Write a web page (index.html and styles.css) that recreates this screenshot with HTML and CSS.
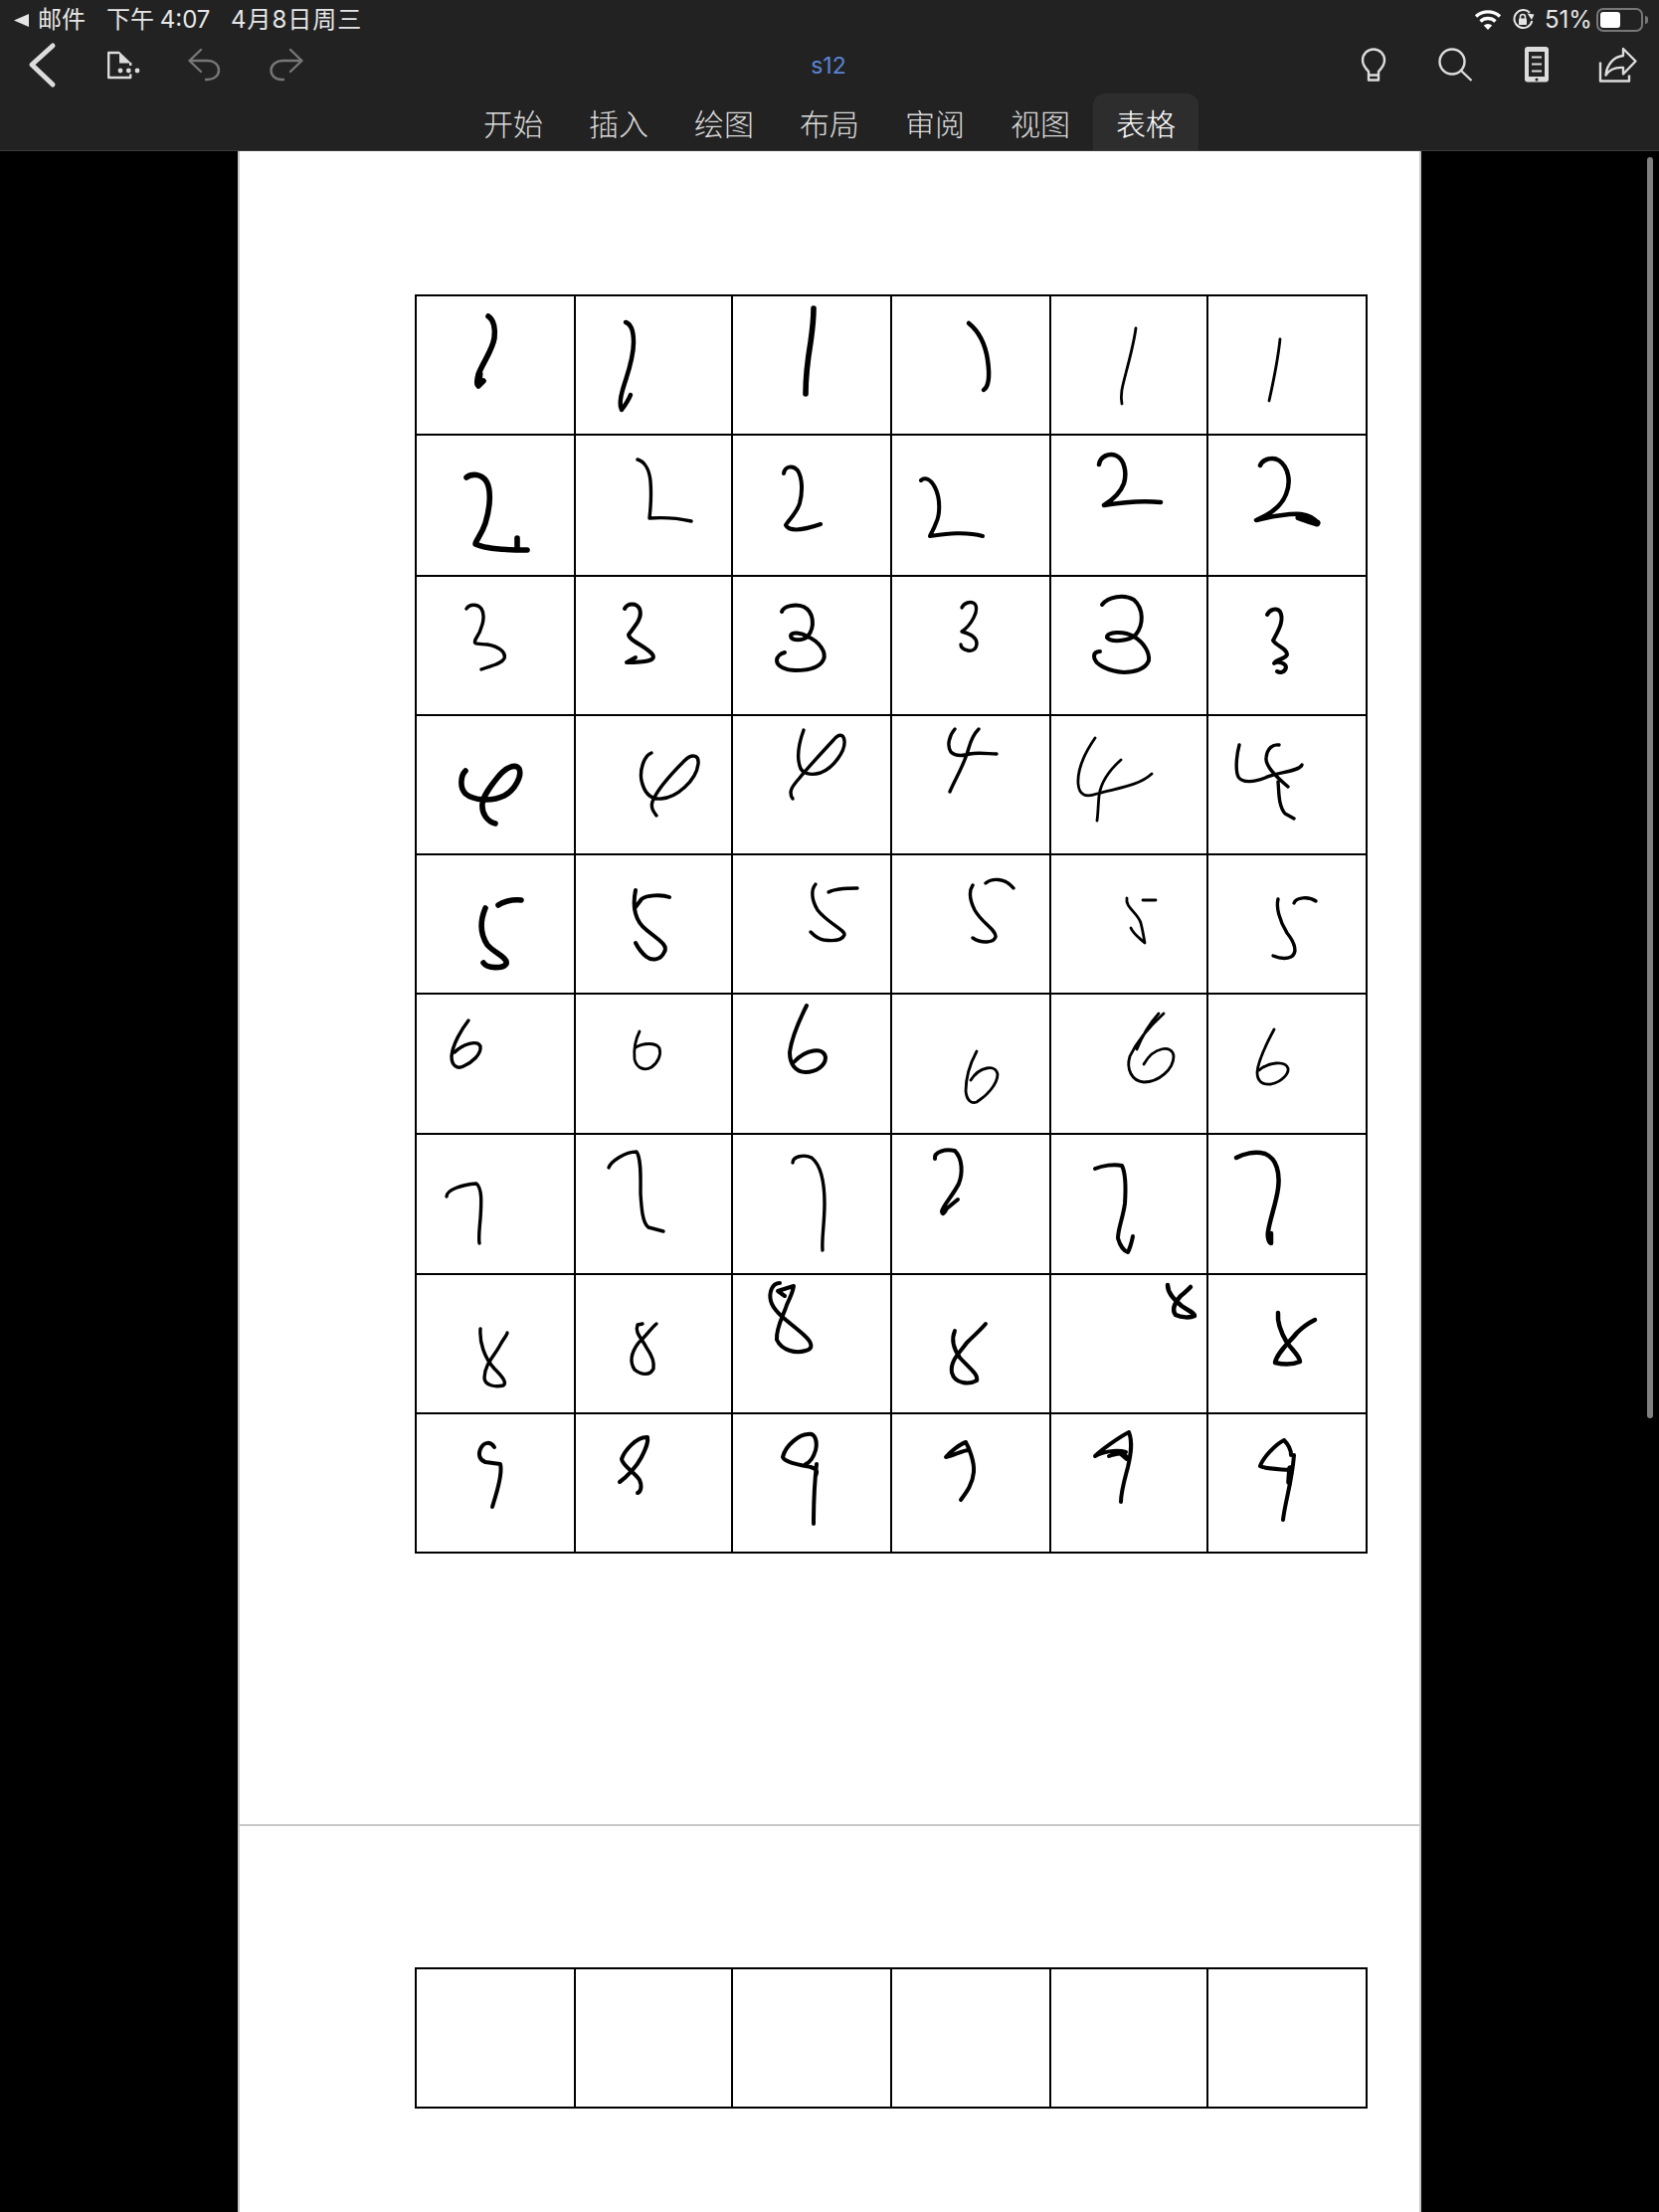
FILE: index.html
```html
<!DOCTYPE html>
<html lang="zh-CN">
<head>
<meta charset="utf-8">
<title>s12</title>
<link rel="stylesheet" href="styles.css">
</head>
<body>
<div class="screen">
  <header class="topbar">
    <div class="status">
      <div class="status-left">
        <span class="crumb"><svg class="back-tri" viewBox="0 0 15 13"><path d="M0 6.500L15 0V13Z"/></svg>邮件</span>
        <span class="time">下午 4:07</span>
        <span class="date">4月8日周三</span>
      </div>
      <div class="status-right">
        <svg class="wifi" viewBox="1483 9 28 22"><path class="wifi-arc" d="M1485 16.500A18 18 0 0 1 1509 16.500"/><path class="wifi-arc" d="M1489.500 21.500A11 11 0 0 1 1504.500 21.500"/><path class="wifi-dot" d="M1497 30L1492.800 25.600A6 6 0 0 1 1501.200 25.600Z"/></svg>
        <svg class="lock" viewBox="1522 9 22 22"><path class="lock-ring" d="M1539 12.800A9 9 0 1 0 1541.300 21"/><path class="lock-head" d="M1536.500 13.500L1543.500 14.500L1541 20Z"/><rect class="lock-body" x="1528" y="18.500" width="8" height="6.500" rx="1"/><path class="lock-shackle" d="M1529.500 19V17A2.500 2.500 0 0 1 1534.500 17V19"/></svg>
        <span class="battery-text">51%</span>
        <span class="battery"><span class="battery-level"></span></span>
        <span class="battery-cap"></span>
      </div>
    </div>
    <div class="toolbar">
      <div class="tools tools-left">
        <svg class="icon w28" viewBox="30 44 28 44"><path class="chevron" d="M53 46L32 65L53 85"/></svg>
        <svg class="icon w32" viewBox="108 44 32 44"><path class="line" d="M120 53H109.200V78H131.200V74.500M131.200 63V66"/><path class="solid" d="M120 52L132 63.500H120Z"/><circle class="solid" cx="121" cy="71" r="2.400"/><circle class="solid" cx="129.300" cy="71" r="2.400"/><circle class="solid" cx="138" cy="71" r="2.400"/></svg>
        <svg class="icon w32" viewBox="190 44 32 44"><path class="dim" d="M202 50L190.500 61L202 72M190.500 61H209C215 61 220 65 220 70.500C220 76 215 80 209 80H207"/></svg>
        <svg class="icon w32" viewBox="272 44 32 44"><path class="dim" d="M292 50L303.500 61L292 72M303.500 61H284C278 61 272.500 65 272.500 70.500C272.500 76 277 80 283 80H285"/></svg>
      </div>
      <div class="doc-title">s12</div>
      <div class="tools tools-right">
        <svg class="icon w30" viewBox="1366 44 30 44"><path class="line" d="M1376 72C1373.500 69 1370 66 1370 60.500A11 11 0 0 1 1392 60.500C1392 66 1388.500 69 1386 72V80.500H1376ZM1376 75.500H1386"/></svg>
        <svg class="icon w36" viewBox="1446 44 36 44"><circle class="line" cx="1460" cy="62" r="12.500"/><path class="line" d="M1469 71L1479.500 81"/></svg>
        <svg class="icon w26" viewBox="1532 44 26 44"><rect class="solid" x="1533" y="47" width="24" height="35.500" rx="3"/><rect class="screen-cut" x="1537" y="52" width="16" height="25"/><path class="tablet-line" d="M1540 57.500H1550M1540 64.500H1550M1540 71.500H1550"/><circle class="screen-cut" cx="1545" cy="80" r="1.500"/></svg>
        <svg class="icon w37" viewBox="1608 44 37 44"><path class="line" d="M1609 62.500V81.500H1638V75.500"/><path class="line" d="M1632 49L1644.500 61.500L1632 74.500V68C1625 67.500 1618.500 69.500 1614.500 75.500C1615.500 65.500 1622 57 1632 56Z"/></svg>
      </div>
    </div>
    <nav class="tabs">
      <span class="tab">开始</span>
      <span class="tab">插入</span>
      <span class="tab">绘图</span>
      <span class="tab">布局</span>
      <span class="tab">审阅</span>
      <span class="tab">视图</span>
      <span class="tab tab-active">表格</span>
    </nav>
  </header>

  <main class="viewport">
    <div class="document">
      <section class="sheet sheet-first">
        <div class="table-wrap">
          <div class="grid grid-full">
            <div class="cell"></div><div class="cell"></div><div class="cell"></div><div class="cell"></div><div class="cell"></div><div class="cell"></div>
            <div class="cell"></div><div class="cell"></div><div class="cell"></div><div class="cell"></div><div class="cell"></div><div class="cell"></div>
            <div class="cell"></div><div class="cell"></div><div class="cell"></div><div class="cell"></div><div class="cell"></div><div class="cell"></div>
            <div class="cell"></div><div class="cell"></div><div class="cell"></div><div class="cell"></div><div class="cell"></div><div class="cell"></div>
            <div class="cell"></div><div class="cell"></div><div class="cell"></div><div class="cell"></div><div class="cell"></div><div class="cell"></div>
            <div class="cell"></div><div class="cell"></div><div class="cell"></div><div class="cell"></div><div class="cell"></div><div class="cell"></div>
            <div class="cell"></div><div class="cell"></div><div class="cell"></div><div class="cell"></div><div class="cell"></div><div class="cell"></div>
            <div class="cell"></div><div class="cell"></div><div class="cell"></div><div class="cell"></div><div class="cell"></div><div class="cell"></div>
            <div class="cell"></div><div class="cell"></div><div class="cell"></div><div class="cell"></div><div class="cell"></div><div class="cell"></div>
          </div>
          <svg class="ink" viewBox="417 296 958 1266" width="958" height="1266">
            <!-- row 1 -->
            <path class="s5" d="M491 318C497 322 498 332 497 340C495 352 486 364 482 374C479 382 479 386 481 388L486 383"/>
            <path class="s6" d="M482 376L481 386"/>
            <path class="s4" d="M629 324C635 326 637 334 637 344C637 362 630 378 626 392C623 402 623 408 625 412C628 408 632 402 634 397"/>
            <path class="s5" d="M818 310C818 320 817 330 815 344C812 362 810 378 810 396"/>
            <path class="s4" d="M974 325C985 334 991 348 993 362C995 376 995 388 989 392"/>
            <path class="s25" d="M1142 330C1140 345 1136 360 1132 375C1129 387 1126 396 1128 406"/>
            <path class="s25" d="M1287 341C1285 360 1280 385 1276 403"/>
            <!-- row 2 -->
            <path class="s5" d="M469 480C474 476 484 476 489 484C494 492 493 510 488 526C484 538 478 544 478 547C488 552 510 553 530 553M520 541L520 552"/>
            <path class="s3" d="M641 462C648 464 653 472 654 484C655 496 654 512 653 521C667 520 682 521 695 524"/>
            <path class="s35" d="M788 476C789 469 797 467 802 473C807 481 807 495 804 506C801 516 792 524 790 528C793 534 805 534 825 527"/>
            <path class="s35" d="M926 483C930 479 936 482 940 490C946 502 945 518 941 526C939 532 936 536 935 539C950 537 970 534 988 539"/>
            <path class="s4" d="M1105 467C1106 459 1115 455 1122 458C1131 462 1133 476 1130 486C1126 497 1118 503 1110 508C1128 505 1148 503 1167 505"/>
            <path class="s4" d="M1267 468C1270 461 1280 459 1286 463C1296 470 1298 485 1293 497C1288 510 1275 518 1263 523C1280 519 1295 516 1308 517C1316 518 1322 522 1325 526"/>
            <path class="s6" d="M1306 520C1312 522 1320 525 1324 526"/>
            <!-- row 3 -->
            <path class="s3" d="M469 612C472 607 480 607 484 612C489 620 484 634 478 643C476 648 478 647 490 648C502 650 509 656 507 662C504 668 494 669 484 673"/>
            <path class="s35" d="M628 612C631 606 640 606 643 612C647 622 636 632 632 638C632 644 650 650 656 658C660 664 650 666 630 666L639 661"/>
            <path class="s35" d="M786 615C788 609 800 607 808 610C818 615 820 630 812 640C806 645 795 644 795 639C796 635 806 636 812 640C824 645 831 656 828 663C824 672 810 674 800 674C790 674 781 670 781 664C781 660 785 657 789 656"/>
            <path class="s3" d="M967 611C969 606 976 604 980 607C985 613 977 628 967 635C975 637 982 640 982 647C982 653 977 655 973 654C969 653 966 651 966 648"/>
            <path class="s35" d="M1108 608C1114 600 1130 597 1140 603C1150 612 1150 628 1142 638C1135 645 1117 646 1113 641C1112 635 1130 634 1140 640C1150 646 1156 656 1155 664C1152 673 1140 676 1130 676C1115 675 1100 668 1100 660C1100 656 1103 655 1106 655"/>
            <path class="s35" d="M1274 618C1277 612 1284 611 1287 615C1292 624 1284 636 1280 644C1284 650 1294 652 1294 658C1293 663 1283 662 1281 667C1285 664 1293 667 1293 671C1292 676 1287 677 1284 675"/>
            <!-- row 4 -->
            <path class="s5" d="M468 775C463 780 462 792 468 798C476 805 495 806 507 800C518 794 525 780 522 773C518 767 508 772 500 782C492 792 486 800 485 808C484 818 490 826 498 828"/>
            <path class="s3" d="M655 757C647 760 643 775 645 785C648 798 655 804 665 803C680 802 700 785 702 768C703 758 695 758 688 765C675 778 660 795 656 806C654 812 657 816 660 820"/>
            <path class="s3" d="M808 734C804 745 801 760 804 770C806 778 815 780 825 777C838 772 850 755 849 745C848 737 843 738 838 744C825 758 812 772 804 782C797 790 792 796 797 803"/>
            <path class="s3" d="M960 733C954 740 952 750 956 756C960 760 968 760 975 758C984 756 994 758 1002 758M984 733C980 737 976 745 974 752C970 768 960 784 955 796"/>
            <path class="s25" d="M1101 742C1092 755 1083 772 1084 788C1085 800 1092 802 1103 798C1125 792 1145 790 1158 778M1127 764C1118 772 1107 785 1105 800C1104 810 1104 818 1103 825"/>
            <path class="s3" d="M1246 749C1243 760 1242 775 1245 781C1249 788 1262 786 1272 782C1285 776 1306 776 1309 769M1286 749C1280 748 1274 752 1273 762C1272 770 1282 780 1295 791M1285 786C1286 795 1285 810 1292 818L1301 823"/>
            <!-- row 5 -->
            <path class="s5" d="M524 905C514 904 505 907 501 910M488 913C483 925 482 938 490 950C497 958 511 963 509 969C506 974 490 974 486 968"/>
            <path class="s35" d="M639 895C636 910 637 925 650 935C662 945 672 950 668 957C664 966 655 966 650 962C645 958 641 952 639 948M673 902C665 899 650 900 645 904L639 912"/>
            <path class="s3" d="M820 889C815 895 816 905 822 915C832 928 850 935 849 940C846 947 835 946 828 945C822 944 818 940 815 937M833 897C840 893 852 893 862 893"/>
            <path class="s3" d="M978 890C974 896 975 905 980 915C987 928 1002 935 1001 942C999 948 987 949 978 943M991 888C997 883 1010 882 1019 893"/>
            <path class="s25" d="M1133 903C1131 912 1144 918 1147 928C1149 936 1150 942 1151 948C1147 944 1140 940 1137 933M1149 905L1162 905"/>
            <path class="s3" d="M1285 904C1283 912 1286 925 1294 938C1302 948 1305 958 1298 962C1292 965 1285 963 1280 961M1301 908C1303 902 1316 901 1323 906"/>
            <!-- row 6 -->
            <path class="s3" d="M471 1026C464 1035 455 1050 454 1062C454 1072 460 1075 466 1072C475 1068 484 1060 483 1052C480 1045 465 1050 457 1058"/>
            <path class="s25" d="M643 1037C639 1045 637 1055 638 1065C640 1074 648 1077 655 1073C662 1068 665 1060 663 1054C660 1048 646 1048 638 1054"/>
            <path class="s35" d="M811 1011C804 1025 796 1042 794 1058C794 1070 800 1078 810 1078C820 1078 830 1072 830 1063C828 1052 810 1055 798 1068"/>
            <path class="s25" d="M982 1057C975 1070 971 1085 971 1097C972 1107 977 1110 982 1108C992 1102 1003 1090 1003 1080C1001 1070 985 1072 976 1086"/>
            <path class="s25" d="M1170 1019C1158 1030 1144 1045 1136 1062C1132 1075 1138 1087 1150 1088C1165 1088 1180 1075 1180 1062C1179 1050 1160 1052 1150 1070M1165 1019C1155 1030 1147 1045 1143 1055"/>
            <path class="s25" d="M1281 1035C1274 1048 1265 1065 1264 1078C1264 1088 1270 1091 1278 1090C1288 1088 1296 1080 1295 1074C1292 1066 1275 1068 1266 1076"/>
            <!-- row 7 -->
            <path class="s3" d="M449 1203C449 1196 465 1191 479 1190C485 1195 484 1210 483 1225C482 1235 481 1245 482 1250"/>
            <path class="s3" d="M612 1174C614 1168 628 1158 640 1158C645 1165 644 1185 644 1200C645 1215 646 1230 652 1234L667 1238"/>
            <path class="s3" d="M797 1169C797 1163 808 1160 816 1164C826 1172 829 1190 829 1210C829 1230 826 1245 827 1257"/>
            <path class="s35" d="M940 1165C939 1158 950 1155 960 1157C968 1165 968 1180 964 1190C958 1202 948 1212 947 1218C948 1223 950 1218 952 1215L963 1206"/>
            <path class="s35" d="M1101 1175C1108 1172 1120 1170 1128 1172C1132 1180 1132 1195 1131 1210C1129 1225 1124 1235 1124 1245C1126 1252 1130 1258 1134 1259C1136 1255 1138 1248 1139 1243"/>
            <path class="s4" d="M1243 1164C1250 1160 1262 1157 1272 1160C1284 1165 1287 1180 1285 1195C1283 1210 1277 1225 1275 1238C1274 1244 1276 1250 1278 1250L1278 1240"/>
            <!-- row 8 -->
            <path class="s3" d="M483 1336C482 1350 487 1365 497 1376C505 1384 510 1390 506 1393C498 1395 487 1393 487 1385C487 1372 498 1362 503 1352C507 1345 510 1342 510 1340"/>
            <path class="s3" d="M641 1332C638 1340 645 1345 650 1355C655 1362 658 1370 657 1376C654 1383 645 1383 638 1377C632 1368 636 1358 642 1350C648 1345 655 1335 660 1331M641 1332L646 1331"/>
            <path class="s35" d="M784 1290C776 1290 773 1300 775 1308C778 1320 795 1330 808 1342C817 1350 818 1356 810 1358C800 1361 786 1358 781 1347C780 1335 788 1322 791 1312C794 1305 797 1300 798 1293L782 1298L789 1303"/>
            <path class="s35" d="M960 1338C957 1345 958 1355 965 1365C975 1376 984 1382 982 1388C975 1392 960 1392 957 1380C955 1368 965 1360 972 1350C980 1342 985 1338 991 1331"/>
            <path class="s4" d="M1174 1292C1174 1300 1180 1306 1188 1313C1195 1318 1201 1320 1201 1323C1197 1325 1188 1325 1182 1322C1178 1317 1181 1310 1187 1303C1191 1300 1195 1296 1197 1294"/>
            <path class="s4" d="M1285 1320C1284 1330 1288 1340 1294 1350C1300 1358 1307 1364 1307 1369C1300 1372 1290 1372 1282 1370C1284 1360 1296 1350 1304 1340C1310 1334 1316 1330 1322 1327"/>
            <!-- row 9 -->
            <path class="s35" d="M497 1455C493 1449 487 1450 484 1455C480 1462 482 1468 488 1470L503 1472C505 1480 501 1495 498 1505L495 1515"/>
            <path class="s35" d="M650 1445C640 1445 628 1458 625 1467C626 1474 638 1480 643 1488C646 1495 644 1500 641 1501M623 1490C630 1485 640 1475 645 1465C650 1455 652 1450 651 1445"/>
            <path class="s35" d="M812 1442C805 1442 790 1452 787 1465C789 1470 800 1472 815 1475C822 1477 822 1480 820 1484M821 1472C819 1490 818 1510 818 1532M812 1442C820 1440 822 1450 820 1458C818 1465 815 1470 810 1472"/>
            <path class="s35" d="M971 1450C965 1452 955 1460 951 1465C958 1464 968 1458 974 1458M971 1450C974 1455 980 1470 979 1480C978 1492 972 1500 966 1508"/>
            <path class="s35" d="M1135 1440C1125 1445 1107 1458 1101 1464C1108 1460 1122 1457 1132 1460C1125 1462 1120 1462 1115 1464M1135 1440C1139 1450 1137 1462 1134 1475C1130 1490 1127 1500 1127 1510"/>
            <path class="s5" d="M1126 1460L1133 1466"/>
            <path class="s35" d="M1291 1448C1283 1452 1270 1465 1267 1474C1272 1477 1285 1477 1297 1478M1291 1448C1296 1453 1298 1458 1298 1463M1301 1463C1299 1490 1292 1510 1290 1528"/>
            <path class="s5" d="M1297 1476L1296 1490"/>
          </svg>
        </div>
      </section>
      <section class="sheet sheet-rest">
        <div class="grid grid-blank">
          <div class="cell"></div><div class="cell"></div><div class="cell"></div><div class="cell"></div><div class="cell"></div><div class="cell"></div>
        </div>
      </section>
    </div>
    <div class="scrollbar"></div>
  </main>
</div>
</body>
</html>
```
FILE: styles.css
```css
* { box-sizing: border-box; }
html, body { margin: 0; padding: 0; background: #000; }
.screen {
  position: relative;
  width: 1668px;
  height: 2224px;
  overflow: hidden;
  display: flex;
  flex-direction: column;
  background: #000;
  font-family: Inter, "Noto Sans CJK SC", sans-serif;
}

/* top bar */
.topbar {
  flex: none;
  height: 152px;
  background: #222;
  border-bottom: 1px solid #3a3a3a;
  color: #e6e6e6;
}
.status {
  height: 38px;
  display: flex;
  justify-content: space-between;
  align-items: center;
  padding: 2px 11px 0 14px;
  font-size: 24px;
  line-height: 36px;
}
.status-left { display: flex; align-items: center; }
.crumb { display: flex; align-items: center; gap: 9px; width: 93px; }
.back-tri { width: 15px; height: 13px; fill: #e6e6e6; }
.time { width: 125px; word-spacing: -1px; }
.date { letter-spacing: 1px; }
.status-right { display: flex; align-items: center; }
.wifi { width: 28px; height: 22px; margin-right: 11px; }
.wifi-arc { fill: none; stroke: #fff; stroke-width: 3.4; }
.wifi-dot { fill: #fff; }
.lock { width: 22px; height: 22px; margin-right: 10px; }
.lock-ring { fill: none; stroke: #e6e6e6; stroke-width: 2; }
.lock-head, .lock-body { fill: #e6e6e6; }
.lock-shackle { fill: none; stroke: #e6e6e6; stroke-width: 1.6; }
.battery-text { width: 52px; }
.battery {
  width: 47px;
  height: 24px;
  border: 2px solid #777;
  border-radius: 7px;
  padding: 2px;
  display: flex;
}
.battery-level { width: 20px; background: #fff; border-radius: 3px; }
.battery-cap { width: 3px; height: 8px; margin-left: 2px; background: #777; border-radius: 0 3px 3px 0; }

.toolbar {
  height: 56px;
  display: grid;
  grid-template-columns: 1fr auto 1fr;
  align-items: center;
  padding: 0 23px 0 30px;
}
.tools { display: flex; align-items: center; gap: 50px; }
.tools-right { justify-content: flex-end; }
.icon { height: 44px; display: block; overflow: visible; }
.w26 { width: 26px; }
.w28 { width: 28px; }
.w30 { width: 30px; }
.w32 { width: 32px; }
.w36 { width: 36px; }
.w37 { width: 37px; }
.chevron { fill: none; stroke: #dcdcdc; stroke-width: 5; stroke-linecap: round; stroke-linejoin: round; }
.line { fill: none; stroke: #dcdcdc; stroke-width: 2.400; stroke-linejoin: round; }
.solid { fill: #dcdcdc; }
.dim { fill: none; stroke: #777; stroke-width: 2.400; stroke-linecap: round; stroke-linejoin: round; }
.screen-cut { fill: #222; }
.tablet-line { stroke: #dcdcdc; stroke-width: 2; }
.doc-title { font-size: 23px; color: #5b84d6; margin-right: 9px; }

.tabs { height: 57px; display: flex; justify-content: center; }
.tab {
  width: 106px;
  display: flex;
  align-items: center;
  justify-content: center;
  font-size: 30px;
  font-weight: 300;
  color: #dcdcdc;
  border-radius: 12px 12px 0 0;
}
.tab-active { background: #2d2d2d; color: #fff; }

/* document */
.viewport { flex: 1; min-height: 0; display: flex; padding-left: 239px; }
.document { width: 1190px; display: flex; flex-direction: column; }
.sheet {
  background: #fff;
  border-left: 2px solid #c8c8c8;
  border-right: 2px solid #c8c8c8;
  padding: 142px 0 0 176px;
}
.sheet-first { flex: none; height: 1684px; padding-top: 144px; border-bottom: 2px solid #c8c8c8; }
.sheet-rest { flex: 1; }
.table-wrap { position: relative; width: 958px; }
.grid {
  width: 958px;
  display: grid;
  grid-template-columns: 158px 156px 158px 158px 156px 158px;
  gap: 2px;
  padding: 2px;
  background: #000;
}
.grid-full { grid-template-rows: 138px 140px 138px 138px 138px 139px 139px 138px 138px; }
.grid-blank { grid-template-rows: 138px; }
.cell { background: #fff; }
.ink { position: absolute; top: 0; left: 0; }
.ink path { fill: none; stroke: #000; stroke-linecap: round; stroke-linejoin: round; }
.ink .s25 { stroke-width: 2.800; }
.ink .s3 { stroke-width: 3.400; }
.ink .s35 { stroke-width: 4; }
.ink .s4 { stroke-width: 4.500; }
.ink .s5 { stroke-width: 5.600; }
.ink .s6 { stroke-width: 7; }

.scrollbar {
  position: absolute;
  top: 158px;
  right: 6px;
  width: 6px;
  height: 1268px;
  border-radius: 3px;
  background: #808080;
}
```
